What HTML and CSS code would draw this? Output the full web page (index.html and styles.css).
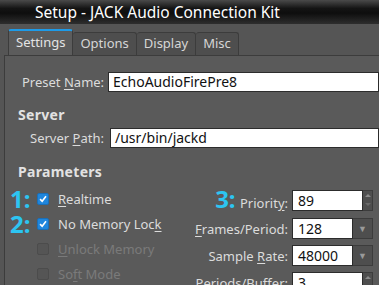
FILE: index.html
```html
<!DOCTYPE html>
<html lang="en">
<head>
  <meta charset="UTF-8">
  <title>Setup - JACK Audio Connection Kit</title>
  <link rel="stylesheet" href="styles.css">
</head>
<body>

  <!-- Title bar -->
  <div class="titlebar">Setup - JACK Audio Connection Kit</div>

  <!-- Tabs -->
  <div class="tabs">
    <div class="tab active">Settings</div>
    <div class="tab">Options</div>
    <div class="tab">Display</div>
    <div class="tab">Misc</div>
  </div>

  <div class="panel">
    <div class="row preset">
      <label class="label">Preset <u>N</u>ame:</label>
      <div class="field wide">EchoAudioFirePre8</div>
    </div>

    <h3 class="heading">Server</h3>
    <div class="row server">
      <label class="label">Server <u>P</u>ath:</label>
      <div class="field wide">/usr/bin/jackd</div>
    </div>

    <h3 class="heading params-title">Parameters</h3>
    <div class="params">
      <div class="checks">
        <div class="check">
          <span class="num">1:</span>
          <span class="box on"><svg viewBox="0 0 11 11"><path d="M2.3 5.6 L4.6 8 L8.8 2.6" /></svg></span>
          <span><u>R</u>ealtime</span>
        </div>
        <div class="check">
          <span class="num">2:</span>
          <span class="box on"><svg viewBox="0 0 11 11"><path d="M2.3 5.6 L4.6 8 L8.8 2.6" /></svg></span>
          <span>No Memory Loc<u>k</u></span>
        </div>
        <div class="check off">
          <span class="num"></span>
          <span class="box"></span>
          <span><u>U</u>nlock Memory</span>
        </div>
        <div class="check off">
          <span class="num"></span>
          <span class="box"></span>
          <span>So<u>f</u>t Mode</span>
        </div>
      </div>

      <div class="fields">
        <label class="flabel"><span class="num">3:</span> Priorit<u>y</u>:</label>
        <div class="spin"><span class="val">89</span><span class="arrows"><i class="up"></i><i class="down"></i></span></div>

        <label class="flabel"><u>F</u>rames/Period:</label>
        <div class="combo"><span class="val">128</span><span class="drop">▼</span></div>

        <label class="flabel">Sample <u>R</u>ate:</label>
        <div class="combo"><span class="val">48000</span><span class="drop">▼</span></div>

        <label class="flabel">Periods/Buffer:</label>
        <div class="spin"><span class="val">3</span><span class="arrows"><i class="up"></i><i class="down"></i></span></div>
      </div>
    </div>
  </div>

</body>
</html>
```

FILE: styles.css
```css
* {
  box-sizing: border-box;
}

body {
  margin: 0;
  width: 379px;
  height: 285px;
  overflow: hidden;
  background: #555;
  font-family: 'Noto Sans', sans-serif;
  font-size: 13px;
  color: #dcdcdc;
}

u {
  text-decoration-thickness: 1px;
  text-underline-offset: 2px;
}

.titlebar {
  height: 24px;
  line-height: 24px;
  padding-left: 35px;
  font-size: 15.5px;
  color: #fff;
  background: linear-gradient(#4a4a4a, #141414 35%, #0e0e0e 55%, #2e2e2e);
  white-space: nowrap;
}

.tabs {
  display: flex;
  align-items: flex-end;
  padding: 5px 0 0 8px;
}

.tab {
  height: 23px;
  line-height: 21px;
  padding: 0 7px;
  font-size: 13px;
  color: #d6d6d6;
  background: #4e4e4e;
  border: 1px solid #3c3c3c;
  border-bottom: none;
  border-left: none;
  border-radius: 3px 3px 0 0;
}

.tab.active {
  height: 26px;
  line-height: 22px;
  background: #5c5c5c;
  border: 1px solid #3c3c3c;
  border-top: 2px solid #1e9be8;
  border-bottom: none;
  color: #e4e4e4;
}

.panel {
  margin-left: 4px;
  height: 240px;
  background: #5a5a5a;
  border: 1px solid #3c3c3c;
  border-right: none;
  padding-top: 16px;
}

.row {
  display: flex;
  align-items: center;
}

.preset .label {
  width: 103px;
  padding-left: 17px;
}

.server {
  margin-top: 4px;
}

.server .label {
  width: 105px;
  padding-left: 25px;
}

.field {
  height: 20px;
  line-height: 18px;
  padding-left: 4px;
  font-size: 14px;
  color: #111;
  background: #fff;
  border: 1px solid #2c2c2c;
}

.field.wide {
  flex: 1;
}

.heading {
  margin: 14px 0 0 13px;
  height: 18px;
  line-height: 18px;
  font-size: 14px;
  font-weight: bold;
  color: #e2e2e2;
  letter-spacing: 0.3px;
}

.params-title {
  margin-top: 15px;
}

.params {
  display: flex;
  width: 368px;
  margin-top: 7px;
  padding-left: 5px;
}

.checks {
  display: flex;
  flex-direction: column;
  gap: 3px;
}

.check {
  display: flex;
  align-items: center;
  height: 22px;
  white-space: nowrap;
}

.check.off {
  color: #7a7a7a;
}

.num {
  display: inline-block;
  width: 27px;
  font-size: 24px;
  font-weight: bold;
  color: #2cc5f2;
  line-height: 22px;
}

.box {
  width: 12px;
  height: 12px;
  margin-right: 9px;
  border-radius: 2px;
  background: #555;
  border: 1px solid #4c4c4c;
}

.box.on {
  background: #1f86dd;
  border-color: #1a6fb8;
}

.box svg {
  display: block;
  width: 10px;
  height: 10px;
}

.box svg path {
  fill: none;
  stroke: #fff;
  stroke-width: 1.8;
}

.fields {
  flex: 1;
  display: grid;
  grid-template-columns: auto 81px;
  justify-content: end;
  align-items: center;
  column-gap: 4px;
  row-gap: 6px;
}

.flabel {
  text-align: right;
  white-space: nowrap;
}

.flabel .num {
  width: auto;
  margin-right: 1px;
}

.spin,
.combo {
  display: flex;
  height: 21px;
  font-size: 14px;
  color: #111;
}

.val {
  flex: 1;
  height: 21px;
  line-height: 19px;
  padding-left: 5px;
  background: #fff;
  border: 1px solid #2c2c2c;
}

.arrows {
  width: 10px;
  display: flex;
  flex-direction: column;
  background: #4e4e4e;
  border: 1px solid #3c3c3c;
  border-left: none;
}

.arrows i {
  flex: 1;
  display: flex;
  align-items: center;
  justify-content: center;
}

.arrows i::after {
  content: '';
  border-left: 3px solid transparent;
  border-right: 3px solid transparent;
}

.arrows .up::after {
  border-bottom: 3px solid #8a8a8a;
}

.arrows .down::after {
  border-top: 3px solid #6a6a6a;
}

.drop {
  width: 20px;
  line-height: 19px;
  text-align: center;
  font-size: 9px;
  color: #9a9a9a;
  background: #4e4e4e;
  border: 1px solid #3c3c3c;
  border-left: none;
}
```
